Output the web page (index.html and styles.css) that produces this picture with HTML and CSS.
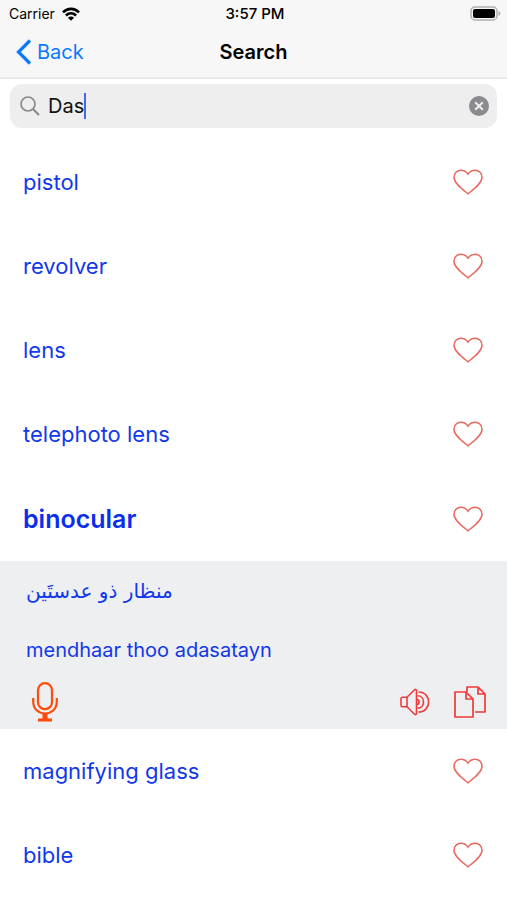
FILE: index.html
```html
<!DOCTYPE html>
<html lang="en">
<head>
<meta charset="utf-8">
<meta name="viewport" content="width=device-width, initial-scale=1">
<title>Search</title>
<link rel="stylesheet" href="styles.css">
</head>
<body>
<svg class="sprite" aria-hidden="true">
  <symbol id="heart" viewBox="0 0 30 26"><path d="M15 24.800C9.500 20.300 1 14.500 1 8.200C1 4.200 4 1.200 7.800 1.200C11.300 1.200 13.800 3.200 15 5.200C16.200 3.200 18.700 1.200 22.200 1.200C26 1.200 29 4.200 29 8.200C29 14.500 20.500 20.300 15 24.800Z"/></symbol>
</svg>
<header class="top">
  <div class="status">
    <div class="carrier">
      <span>Carrier</span>
      <svg class="wifi" viewBox="0 0 18 14" aria-hidden="true"><path d="M1 5.300C5.600 0.700 12.400 0.700 17 5.300M3.900 8.500C6.900 5.700 11.100 5.700 14.100 8.500" fill="none" stroke="#000" stroke-width="2.600"/><path d="M9 13.700L5.900 10.700C7.700 9.100 10.300 9.100 12.100 10.700Z"/></svg>
    </div>
    <time class="clock">3:57 PM</time>
    <svg class="battery" viewBox="0 0 31 15" aria-label="Battery full" role="img"><rect x="1" y="1" width="26" height="13" rx="4" fill="#f7f7f7" stroke="#b0b0b0" stroke-width="1.500"/><rect x="3" y="3" width="22" height="9" rx="2" fill="#000"/><path d="M28.500 5C31 5.800 31 9.200 28.500 10Z" fill="#b0b0b0"/></svg>
  </div>
  <nav class="bar">
    <a class="back" href="#">
      <svg class="chevron" viewBox="0 0 16 26" aria-hidden="true"><path d="M14 1.500L2.500 13L14 24.500" fill="none" stroke="#0a7aff" stroke-width="3.200"/></svg>
      Back
    </a>
    <h1 class="title">Search</h1>
  </nav>
</header>
<main>
  <form class="search">
    <label class="field">
      <svg class="glass" viewBox="0 0 20 20" aria-hidden="true"><circle cx="8" cy="8" r="7" fill="none" stroke="#8b8b8f" stroke-width="1.700"/><path d="M13 13L19 19" stroke="#8b8b8f" stroke-width="2.200"/></svg>
      <input class="query" type="text" value="Das" aria-label="Search">
      <span class="caret"></span>
    </label>
    <button class="clear" type="reset" aria-label="Clear">
      <svg viewBox="0 0 20 20"><circle cx="10" cy="10" r="10" fill="#8b8b8f"/><path d="M6.200 6.200L13.800 13.800M13.800 6.200L6.200 13.800" stroke="#eee" stroke-width="2"/></svg>
    </button>
  </form>
  <ul class="words">
    <li class="row"><span>pistol</span><button class="like" aria-label="Favourite pistol"><svg><use href="#heart"/></svg></button></li>
    <li class="row"><span>revolver</span><button class="like" aria-label="Favourite revolver"><svg><use href="#heart"/></svg></button></li>
    <li class="row"><span>lens</span><button class="like" aria-label="Favourite lens"><svg><use href="#heart"/></svg></button></li>
    <li class="row"><span>telephoto lens</span><button class="like" aria-label="Favourite telephoto lens"><svg><use href="#heart"/></svg></button></li>
    <li class="row selected"><span>binocular</span><button class="like" aria-label="Favourite binocular"><svg><use href="#heart"/></svg></button></li>
    <li class="detail">
      <p class="arabic" lang="ar"><bdi>منظار ذو عدستَين</bdi></p>
      <p class="latin">mendhaar thoo adasatayn</p>
      <div class="actions">
        <button class="mic" aria-label="Record"><svg viewBox="0 0 26 40"><g fill="none" stroke="#ff4a0c" stroke-width="2.200"><rect x="6" y="1.200" width="14" height="26" rx="7"/><path d="M1.200 16V19.500C1.200 27 6.500 31.500 13 31.500S24.800 27 24.800 19.500V16"/></g><path d="M10.500 31.500H15.500V36.500H20V39.500H6V36.500H10.500Z" fill="#ff4a0c"/></svg></button>
        <button class="speak" aria-label="Listen"><svg viewBox="0 0 30 28"><g fill="none" stroke="#f03a3a" stroke-width="1.600" stroke-linejoin="round"><path d="M7 9.200L14.500 1.800C15.300 1 16.500 1.300 16.500 2.500V25.500C16.500 26.700 15.300 27 14.500 26.200L7 18.800Z"/><path d="M7 9.200H2.500C1.500 9.200 1 9.700 1 10.700V17.300C1 18.300 1.500 18.800 2.500 18.800H7"/><path d="M16.500 11.500C20 11.500 20 16.500 16.500 16.500M17.500 7.800C25.500 7.800 25.500 20.200 17.500 20.200M18.500 4C32 4 32 24 18.500 24"/></g></svg></button>
        <button class="copy" aria-label="Copy"><svg viewBox="0 0 32 32"><g fill="none" stroke="#f03a3a" stroke-width="1.700" stroke-linejoin="round"><path d="M1 6H12L19 13V31H1Z"/><path d="M12 6V13H19"/><path d="M13 6V1H24L31 8V26H21M24 1V8H31"/></g></svg></button>
      </div>
    </li>
    <li class="row"><span>magnifying glass</span><button class="like" aria-label="Favourite magnifying glass"><svg><use href="#heart"/></svg></button></li>
    <li class="row"><span>bible</span><button class="like" aria-label="Favourite bible"><svg><use href="#heart"/></svg></button></li>
  </ul>
</main>
</body>
</html>
```
FILE: styles.css
```css
* {
  box-sizing: border-box;
}

body {
  margin: 0;
  background: #fff;
  color: #000;
  font-family: Inter, "Liberation Sans", sans-serif;
}

button {
  display: block;
  padding: 0;
  border: 0;
  background: none;
}

svg {
  display: block;
}

button svg {
  width: 100%;
  height: 100%;
}

.sprite {
  position: absolute;
  width: 0;
  height: 0;
}

.top {
  background: #f7f7f7;
  border-bottom: 2px solid #e9e9e9;
}

.status {
  display: grid;
  grid-template-columns: 1fr auto 1fr;
  align-items: center;
  height: 27px;
  padding: 0 6px 0 9px;
  font-size: 14px;
}

.carrier {
  display: flex;
  align-items: center;
  gap: 7px;
}

.wifi {
  width: 18px;
  height: 14px;
}

.clock {
  font-size: 15px;
  font-weight: 500;
}

.battery {
  justify-self: end;
  width: 31px;
  height: 15px;
}

.bar {
  display: grid;
  grid-template-columns: 1fr auto 1fr;
  align-items: center;
  height: 50px;
  padding: 0 16px;
  font-size: 20px;
}

.back {
  display: flex;
  align-items: center;
  gap: 5px;
  color: #0a7aff;
  font-size: 20px;
  text-decoration: none;
}

.chevron {
  width: 16px;
  height: 26px;
}

.title {
  margin: 0;
  font-size: 20px;
  font-weight: 600;
}

.search {
  display: flex;
  align-items: center;
  height: 44px;
  margin: 5px 10px 12px;
  padding: 0 8px 0 10px;
  border-radius: 12px;
  background: #eee;
}

.field {
  display: flex;
  flex: 1;
  align-items: center;
}

.glass {
  width: 20px;
  height: 20px;
  margin-right: 8px;
}

.query {
  field-sizing: content;
  padding: 0;
  border: 0;
  outline: 0;
  background: none;
  color: #111;
  font: 20px Inter, "Liberation Sans", sans-serif;
}

.caret {
  width: 2px;
  height: 26px;
  background: #4169e8;
}

.clear {
  width: 20px;
  height: 20px;
}

.words {
  margin: 0;
  padding: 0;
  list-style: none;
  color: #1238ea;
}

.row {
  display: flex;
  align-items: center;
  justify-content: space-between;
  height: 84px;
  padding: 0 24px 0 23px;
  font-size: 22px;
}

.selected {
  height: 85px;
  color: #0a2ef0;
  font-size: 25px;
  font-weight: 600;
}

.like {
  width: 30px;
  height: 26px;
  fill: none;
  stroke: #e8695f;
  stroke-width: 1.500px;
}

.detail {
  padding: 16px 21px 7px 26px;
  background: #edeff1;
}

.detail p {
  margin: 0;
}

.arabic {
  height: 58px;
  font: 20px/28px "DejaVu Sans", sans-serif;
}

.latin {
  font-size: 20px;
  line-height: 30px;
}

.actions {
  display: flex;
  align-items: center;
  gap: 24px;
  margin-top: 17px;
  padding-left: 6px;
}

.mic {
  width: 26px;
  height: 40px;
  margin-right: auto;
}

.speak {
  width: 30px;
  height: 28px;
}

.copy {
  width: 32px;
  height: 32px;
}
```
